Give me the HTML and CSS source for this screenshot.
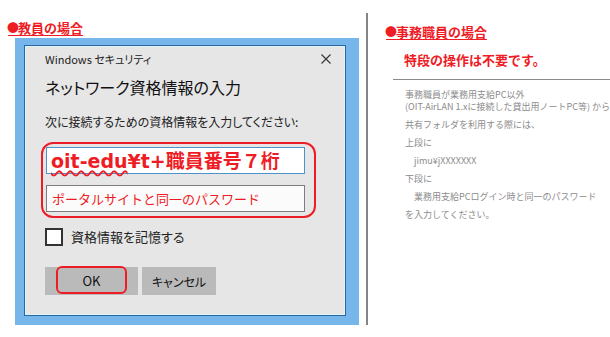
FILE: index.html
```html
<!DOCTYPE html>
<html lang="ja">
<head>
<meta charset="utf-8">
<title>ネットワーク資格情報の入力</title>
<link rel="stylesheet" href="styles.css">
</head>
<body>
<main class="page">
  <section class="teacher">
    <h2 class="case-title"><span class="dot">●</span>教員の場合</h2>
    <div class="frame">
      <div class="dialog">
        <div class="dlg-top">
          <span class="dlg-app">Windows セキュリティ</span>
          <svg class="close" width="10" height="10" viewBox="0 0 10 10"><path d="M0.5 0.5L9.5 9.5M9.5 0.5L0.5 9.5" stroke="#333" stroke-width="1.1" fill="none"/></svg>
        </div>
        <h1 class="dlg-title">ネットワーク資格情報の入力</h1>
        <p class="dlg-msg">次に接続するための資格情報を入力してください:</p>
        <div class="callout">
          <div class="field field-user"><span class="user-text"><span class="wavy">oit-edu</span>¥t+職員番号７桁</span></div>
          <div class="field field-pass">ポータルサイトと同一のパスワード</div>
        </div>
        <div class="remember"><span class="box"></span><span>資格情報を記憶する</span></div>
        <div class="buttons">
          <div class="btn btn-ok"><span class="ok-mark">OK</span></div>
          <div class="btn btn-cancel">キャンセル</div>
        </div>
      </div>
    </div>
  </section>
  <div class="divider"></div>
  <section class="staff">
    <h2 class="case-title"><span class="dot">●</span>事務職員の場合</h2>
    <p class="no-op">特段の操作は不要です。</p>
    <div class="rule"></div>
    <div class="notes">
      <p>事務職員が業務用支給PC以外<br>(OIT-AirLAN 1.xに接続した貸出用ノートPC等) から</p>
      <p>共有フォルダを利用する際には、</p>
      <p>上段に</p>
      <p class="indent">jimu¥jXXXXXXX</p>
      <p>下段に</p>
      <p class="indent">業務用支給PCログイン時と同一のパスワード</p>
      <p>を入力してください。</p>
    </div>
  </section>
</main>
</body>
</html>
```

FILE: styles.css
```css
* { box-sizing: border-box; }
html, body { margin: 0; padding: 0; background: #fff; }
body {
  width: 610px;
  height: 337px;
  overflow: hidden;
  font-family: "Noto Sans CJK JP", "Noto Sans", sans-serif;
  color: #222;
}
.page {
  display: flex;
  align-items: flex-start;
  height: 337px;
}
.teacher {
  width: 367px;
  padding: 20px 0 0 8px;
  display: flex;
  flex-direction: column;
  align-items: flex-start;
}
.case-title {
  margin: 0;
  display: inline-flex;
  align-items: center;
  font-size: 13px;
  line-height: 15px;
  font-weight: bold;
  color: #ee1c25;
  border-bottom: 1px solid #ee1c25;
}
.dot {
  font-size: 12px;
  margin-left: -1px;
  margin-right: -1px;
}
.frame {
  margin: 2px 0 0 7px;
  width: 344px;
  height: 287px;
  background: #76b6ea;
  padding: 7px 13px 9px 9px;
}
.dialog {
  width: 322px;
  height: 271px;
  background: #e6e6e6;
  border: 1px solid #2c66a0;
  box-shadow: inset 0 0 0 1px #dff4fb;
  padding: 5px 15px 0 20px;
  display: flex;
  flex-direction: column;
  align-items: flex-start;
  font-feature-settings: "palt";
}
.dlg-top {
  width: 100%;
  height: 16px;
  display: flex;
  justify-content: space-between;
  align-items: center;
}
.dlg-app {
  font-size: 11px;
  line-height: 16px;
  color: #222;
}
.close { display: block; margin-right: -1px; }
.dlg-title {
  margin: 10px 0 0;
  font-size: 16px;
  line-height: 20px;
  font-weight: normal;
  color: #111;
}
.dlg-msg {
  margin: 17px 0 0;
  font-size: 12px;
  line-height: 16px;
  color: #222;
}
.callout {
  margin: 12px 0 0 -4px;
  width: 275px;
  border: 2px solid #ee1c25;
  border-radius: 12px;
  padding: 3px 9px 4px 3px;
  display: flex;
  flex-direction: column;
  gap: 11px;
  font-feature-settings: normal;
}
.field {
  width: 259px;
  height: 27px;
  display: flex;
  align-items: center;
  color: #ee1c25;
  white-space: nowrap;
}
.field-user {
  background: #fff;
  border: 1px solid #4c93cc;
  padding-left: 4px;
  font-family: "DejaVu Sans", "Noto Sans CJK JP", sans-serif;
  font-weight: bold;
  font-size: 19px;
  line-height: 22px;
}
.user-text { display: inline; }
.wavy {
  text-decoration-line: underline;
  text-decoration-style: wavy;
  text-decoration-color: #ee1c25;
  text-decoration-thickness: 1.5px;
  text-underline-offset: 2px;
}
.field-pass {
  background: #fbfbfb;
  border: 1px solid #7d7d7d;
  padding-left: 5px;
  font-size: 13px;
  line-height: 18px;
}
.remember {
  margin-top: 10px;
  display: flex;
  align-items: center;
  gap: 8px;
  font-size: 13px;
  line-height: 18px;
  color: #222;
}
.box {
  width: 18px;
  height: 18px;
  border: 2px solid #333;
  background: #fff;
}
.buttons {
  margin-top: 21px;
  display: flex;
  gap: 4px;
}
.btn {
  height: 28px;
  background: #bababa;
  display: flex;
  align-items: center;
  justify-content: center;
  font-size: 12px;
  color: #111;
}
.btn-ok { width: 93px; align-items: flex-start; }
.btn-cancel { width: 74px; }
.ok-mark {
  width: 71px;
  height: 28px;
  margin-top: -1px;
  border: 2px solid #ee1c25;
  border-radius: 6px;
  display: flex;
  align-items: center;
  justify-content: center;
  font-size: 13px;
}
.divider {
  width: 2px;
  height: 312px;
  margin-top: 13px;
  background: #858585;
}
.staff {
  flex: 1;
  padding: 24px 0 0 18px;
  display: flex;
  flex-direction: column;
  align-items: flex-start;
}
.no-op {
  margin: 12px 0 0 18px;
  font-size: 13px;
  line-height: 16px;
  font-weight: bold;
  color: #ee1c25;
}
.rule {
  margin: 11px 0 0 7px;
  align-self: stretch;
  height: 1px;
  background: #8a8a8a;
}
.notes {
  margin: 9px 0 0 19px;
  font-size: 9px;
  line-height: 12px;
  color: #8c8c8c;
  white-space: nowrap;
}
.notes p { margin: 0 0 6px; }
.notes .indent { padding-left: 9px; }
```
